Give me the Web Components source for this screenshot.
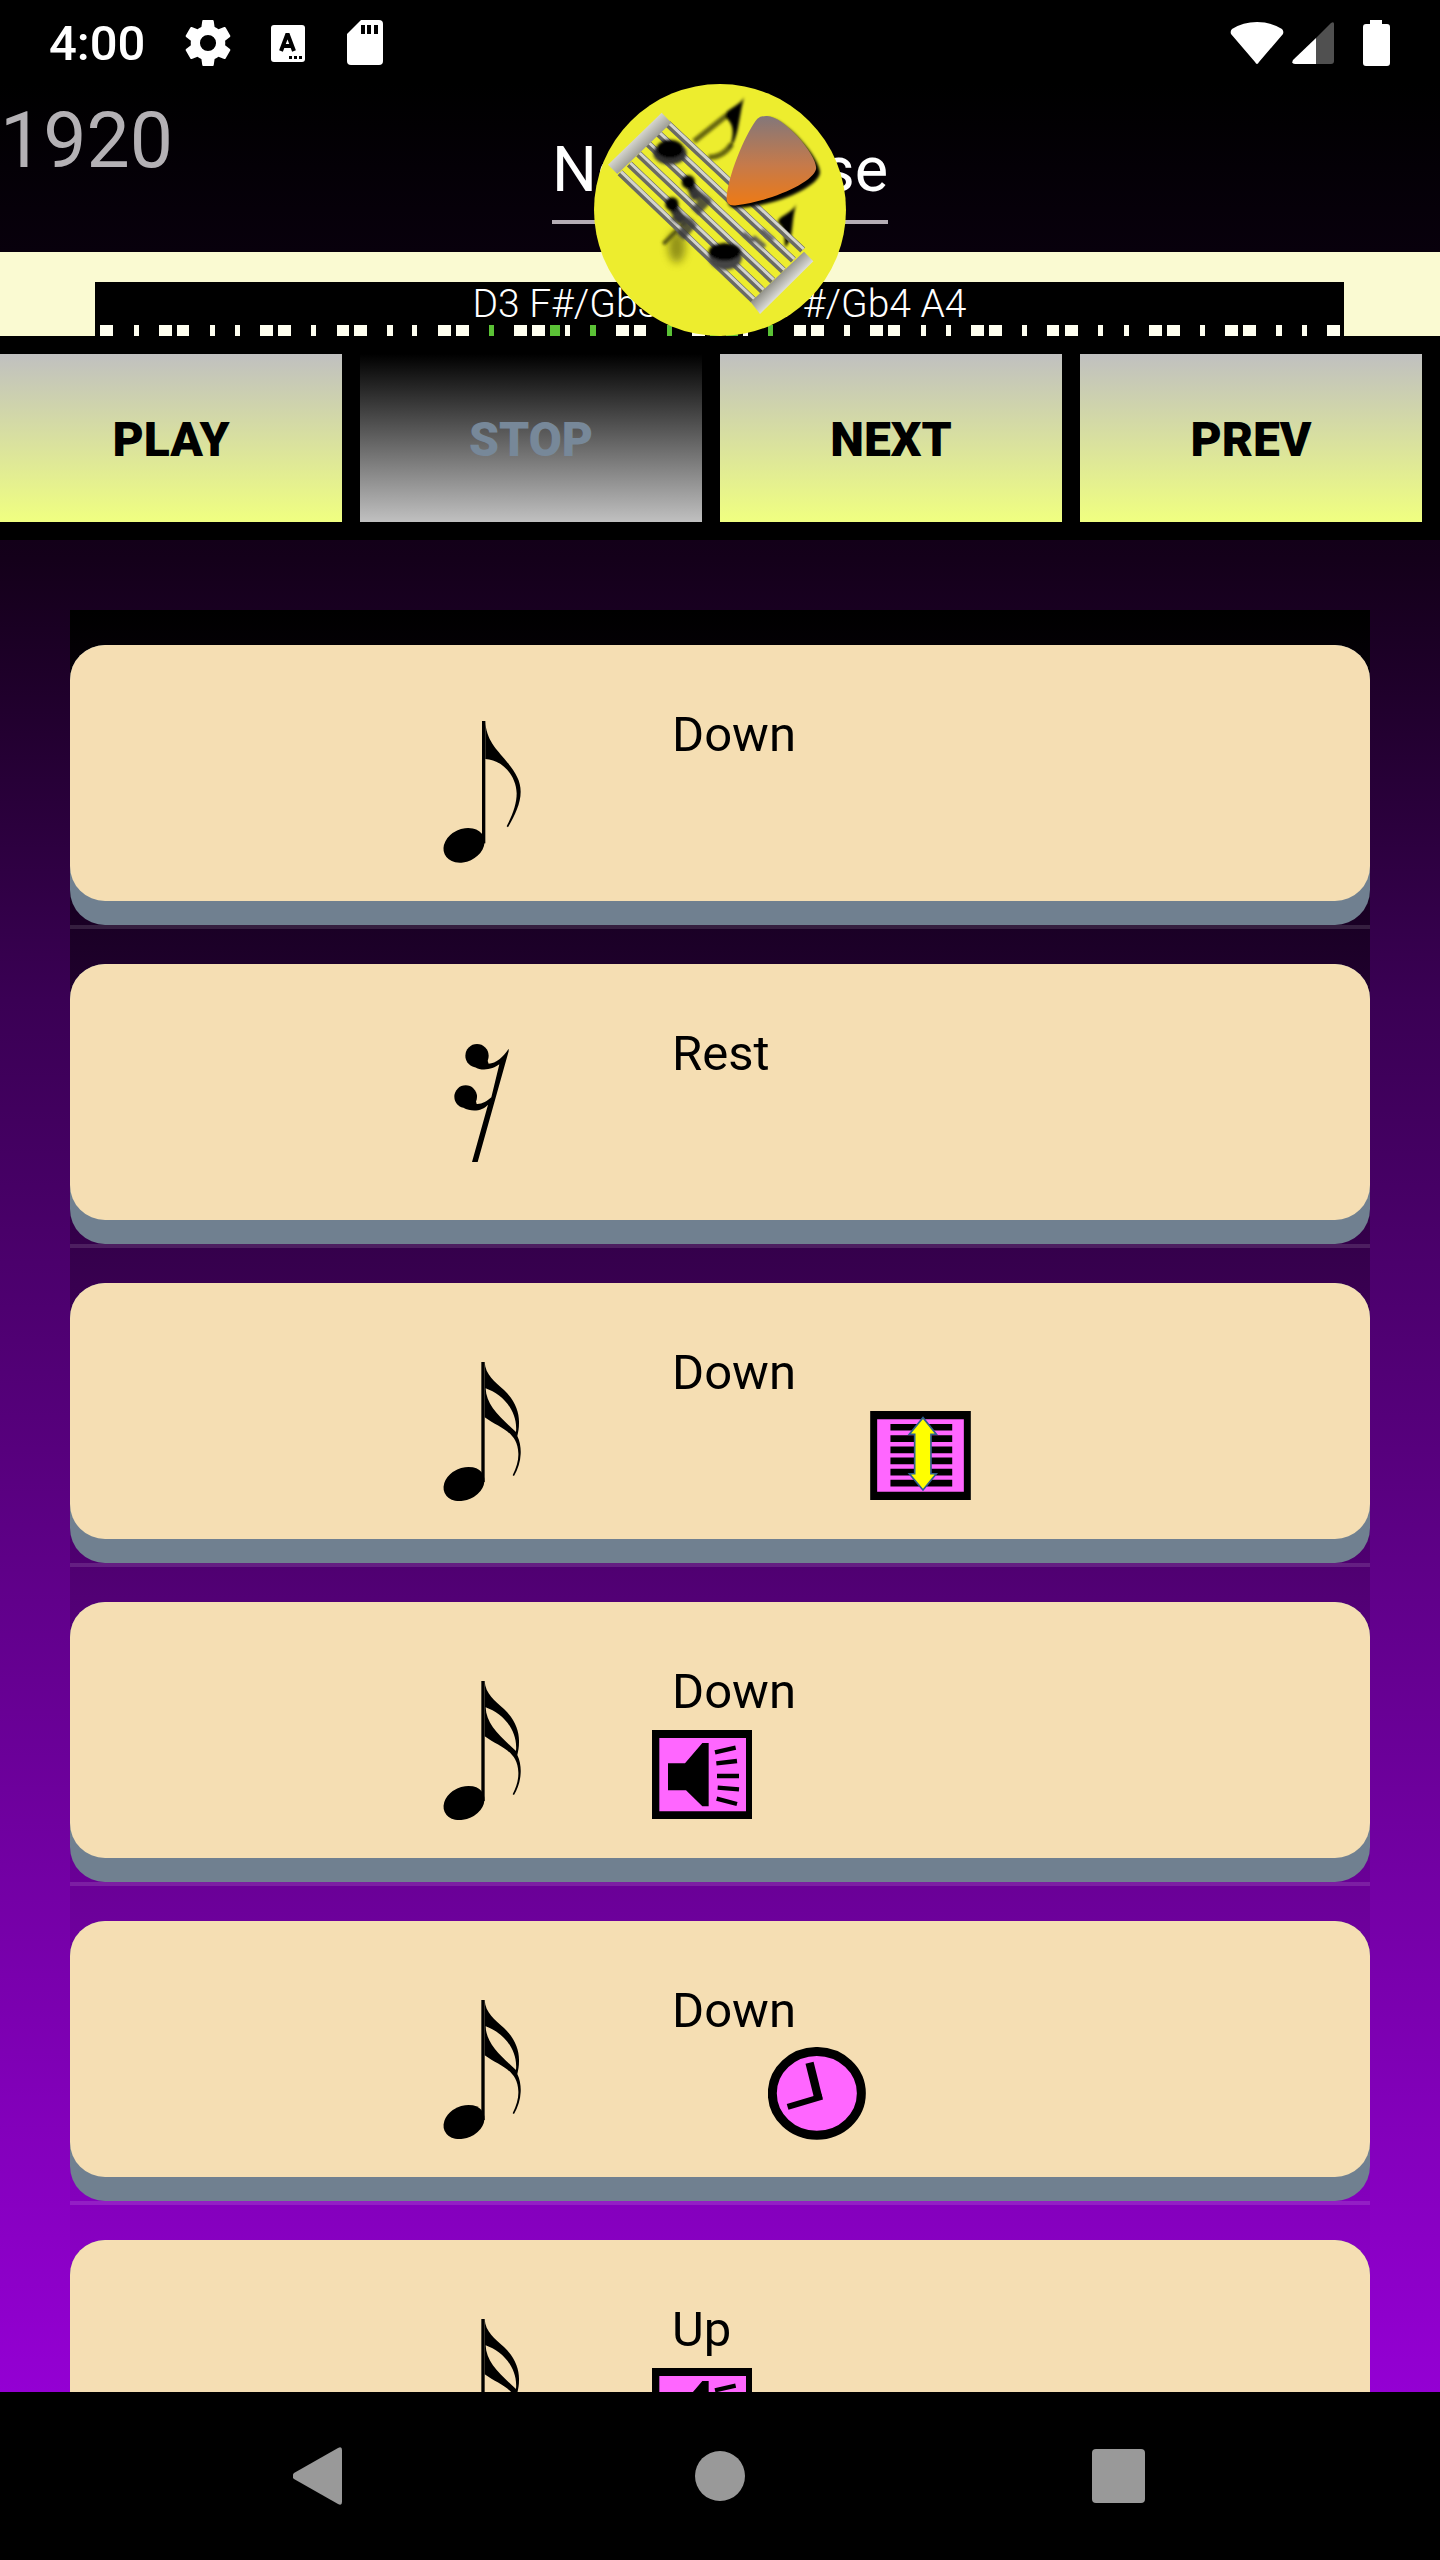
<!DOCTYPE html>
<html lang="en">
<head>
<meta charset="utf-8">
<meta name="viewport" content="width=device-width, initial-scale=1">
<title>New Phrase</title>
<style>
  body {
    margin: 0;
    background: #000;
    font-family: Roboto, "Liberation Sans", sans-serif;
  }
</style>
</head>
<body>
<phrase-app></phrase-app>

<script>
const makeTemplate = (html) => {
  const template = document.createElement('template');
  template.innerHTML = html;
  return template;
};

class BaseElement extends HTMLElement {
  constructor() {
    super();
    this.attachShadow({ mode: 'open' });
    this.shadowRoot.appendChild(this.constructor.template.content.cloneNode(true));
  }
}

class StatusBar extends BaseElement {}
StatusBar.template = makeTemplate(`
  <style>
    :host {
      display: flex;
      align-items: center;
      justify-content: space-between;
      box-sizing: border-box;
      height: 84px;
      padding: 2px 50px 0 49px;
      color: #fff;
      font-size: 49px;
      font-weight: 500;
    }
    .group { display: flex; align-items: center; }
    .left { gap: 40px; }
    .right { gap: 8px; }
    .battery { margin-left: 20px; }
    svg { display: block; }
  </style>
  <div class="group left">
    <span>4:00</span>
    <svg width="46" height="46" viewBox="2 2 20 20" fill="#fff"><path d="M19.43 12.98c.04-.32.07-.64.07-.98s-.03-.66-.07-.98l2.11-1.65c.19-.15.24-.42.12-.64l-2-3.46c-.12-.22-.39-.3-.61-.22l-2.49 1c-.52-.4-1.08-.73-1.69-.98l-.38-2.65A.49.49 0 0 0 14 2h-4c-.25 0-.46.18-.49.42l-.38 2.65c-.61.25-1.17.59-1.69.98l-2.49-1c-.23-.09-.49 0-.61.22l-2 3.46c-.13.22-.07.49.12.64l2.11 1.65c-.04.32-.07.65-.07.98s.03.66.07.98l-2.11 1.65c-.19.15-.24.42-.12.64l2 3.46c.12.22.39.3.61.22l2.49-1c.52.4 1.08.73 1.69.98l.38 2.65c.03.24.24.42.49.42h4c.25 0 .46-.18.49-.42l.38-2.65c.61-.25 1.17-.59 1.69-.98l2.49 1c.23.09.49 0 .61-.22l2-3.46c.12-.22.07-.49-.12-.64zM12 15.500a3.500 3.500 0 1 1 0-7 3.500 3.500 0 0 1 0 7z"/></svg>
    <svg width="34" height="37" viewBox="0 0 34 37"><rect width="34" height="37" rx="3" fill="#fff"/><path d="M10 26 16 10h1l6 16M12 21h9" fill="none" stroke="#000" stroke-width="4"/><path d="M18 31h3v3h-3zM23 31h3v3h-3zM28 31h3v3h-3z"/></svg>
    <svg width="40" height="46" viewBox="-2 0 40 46"><path d="M14 0h18q4 0 4 4v37q0 4-4 4H4q-4 0-4-4V14z" fill="#fff"/><path d="M14 5h4v9h-4zM20 5h4v9h-4zM27 5h4v9h-4z"/></svg>
  </div>
  <div class="group right">
    <svg width="54" height="44" viewBox="0 0 54 44"><path d="M27 43Q26 43 25 41L1 13Q0 10 2 8Q13 1 27 1T52 8Q54 10 53 13L29 41Q28 43 27 43z" fill="#fff"/></svg>
    <svg width="43" height="44" viewBox="0 0 43 44"><path d="M24 17 39 2q3-2 3 1v37q0 3-3 3H24z" fill="#505050"/><path d="M24 17V43H3q-4 0-2-4z" fill="#fff"/></svg>
    <svg class="battery" width="27" height="46" viewBox="0 0 27 46"><path d="M7 0h12v4h5q3 0 3 3v36q0 3-3 3H3q-3 0-3-3V7q0-3 3-3h4z" fill="#fff"/></svg>
  </div>
`);
customElements.define('status-bar', StatusBar);

class AppLogo extends BaseElement {}
AppLogo.template = makeTemplate(`
  <style>
    :host { display: block; width: 252px; height: 252px; }
    svg { display: block; width: 100%; height: 100%; }
  </style>
  <svg viewBox="42 42 756 756">
    <defs>
      <linearGradient id="pick" x1="0" y1="0" x2="0" y2="1">
        <stop offset="0" stop-color="#83777a"/>
        <stop offset=".55" stop-color="#c67a4a"/>
        <stop offset="1" stop-color="#ee7a14"/>
      </linearGradient>
      <linearGradient id="bar" x1="0" y1="0" x2="1" y2="1">
        <stop offset=".35" stop-color="#f0f0ea"/>
        <stop offset=".65" stop-color="#85857c"/>
      </linearGradient>
      <linearGradient id="bar2" x1="0" y1="0" x2="1" y2="1">
        <stop offset=".35" stop-color="#77776f"/>
        <stop offset=".6" stop-color="#e8e8e4"/>
      </linearGradient>
      <filter id="soft" x="-40%" y="-40%" width="180%" height="180%"><feGaussianBlur stdDeviation="4"/></filter>
      <filter id="haze" x="-60%" y="-60%" width="220%" height="220%"><feGaussianBlur stdDeviation="12"/></filter>
      <path id="lines" d="M262 160 668 540M235 190 640 570M205 222 610 602M176 252 578 632M148 282 548 662M120 308 520 690"/>
    </defs>
    <circle cx="420" cy="420" r="378" fill="#eded2e"/>
    <ellipse cx="290" cy="530" rx="26" ry="48" fill="#6c6c10" opacity=".7" filter="url(#haze)"/>
    <g filter="url(#soft)">
      <path d="M342 214 440 136M385 262Q430 262 455 222" fill="none" stroke="#66660c" stroke-width="16"/>
      <path d="M492 82C478 112 425 120 437 144C466 162 462 205 445 240C478 205 474 150 492 82z"/>
      <path d="M650 398C642 432 580 440 598 462C618 480 612 510 616 532C645 500 630 460 650 398z"/>
      <path d="M250 522 320 452" stroke="#55550c" stroke-width="12"/>
    </g>
    <use href="#lines" fill="none" stroke="#6a6a64" stroke-width="21"/>
    <use href="#lines" fill="none" stroke="#d4d4cc" stroke-width="9" transform="translate(3 -3)"/>
    <path d="M245 128 274 158 112 312 84 284z" fill="url(#bar)"/>
    <path d="M672 545 700 574 540 732 512 696z" fill="url(#bar2)"/>
    <g filter="url(#soft)">
      <path d="M325 335 350 385M275 405 305 455" stroke="#222" stroke-width="26"/>
      <path d="M335 365 385 400M345 425 385 385M280 435 335 465M300 500 340 455" stroke="#3a3a3a" stroke-width="30" opacity=".85"/>
      <ellipse cx="270" cy="250" rx="50" ry="34" fill="#333"/>
      <ellipse cx="436" cy="560" rx="50" ry="40" fill="#444"/>
      <ellipse cx="270" cy="237" rx="40" ry="28"/>
      <ellipse cx="434" cy="546" rx="48" ry="26"/>
      <circle cx="325" cy="336" r="20"/>
      <circle cx="276" cy="402" r="20"/>
      <path d="M520 500 555 530M545 480 580 510M490 490 520 515" stroke="#555" stroke-width="12"/>
      <path d="M562 144C610 138 722 264 720 308C718 348 590 408 474 414C450 416 442 404 444 388z"/>
    </g>
    <path d="M558 138C606 132 716 258 708 298C700 336 580 392 470 406C446 410 438 398 440 380C448 300 505 176 532 146Q542 138 558 138z" fill="url(#pick)"/>
  </svg>
`);
customElements.define('app-logo', AppLogo);

class PhraseHeader extends BaseElement {}
PhraseHeader.template = makeTemplate(`
  <style>
    :host {
      display: grid;
      grid-template-columns: 1fr 336px 1fr;
      align-items: start;
      height: 168px;
      position: relative;
    }
    .ticks {
      padding-top: 12px;
      font-size: 77px;
      line-height: 90px;
      color: #b4b1b5;
    }
    input {
      box-sizing: border-box;
      width: 100%;
      height: 92px;
      margin: 48px 0 0;
      padding: 0 0 14px;
      border: 0;
      border-bottom: 4px solid #b5adb5;
      border-radius: 0;
      background: none;
      outline: none;
      color: #fff;
      font: 63px/74px Roboto, "Liberation Sans", sans-serif;
    }
    /* the logo hangs over the title and the chord strip */
    app-logo {
      position: absolute;
      top: 0;
      left: calc(50% - 126px);
      z-index: 1;
    }
  </style>
  <div class="ticks">1920</div>
  <input type="text" value="New Phrase" aria-label="Phrase name">
  <app-logo></app-logo>
`);
customElements.define('phrase-header', PhraseHeader);

class ChordStrip extends BaseElement {
  connectedCallback() {
    // [x, width] of each key slot, with the sounding ones in green
    const keys = [
      [5, 13], [39, 5], [64, 13], [82, 12], [115, 5], [140, 5], [165, 13], [183, 13], [216, 5],
      [242, 12], [259, 13], [292, 6], [317, 5], [343, 13], [361, 13], [394, 5, 1], [419, 13],
      [437, 13], [455, 10, 1], [470, 5], [495, 6, 1], [521, 13], [539, 12], [572, 5, 1],
      [597, 13], [615, 12, 1], [631, 12, 1], [648, 5], [673, 5, 1], [699, 12], [716, 13],
      [749, 6], [775, 13], [793, 12], [826, 5], [851, 5], [876, 13], [894, 13], [927, 5],
      [952, 12], [970, 13], [1003, 5], [1029, 5], [1054, 13], [1072, 13], [1105, 5],
      [1130, 13], [1148, 13], [1181, 6], [1207, 5], [1232, 13],
    ];
    this.shadowRoot.querySelector('svg').innerHTML = keys
      .map(([x, w, on]) => `<rect x="${x}" width="${w}" height="11" fill="${on ? '#5bc236' : '#fffff0'}"/>`)
      .join('');
  }
}
ChordStrip.template = makeTemplate(`
  <style>
    :host {
      display: block;
      padding: 30px 96px 0 95px;
      background: #fafad2;
    }
    .keys { background: #000; }
    .notes {
      box-sizing: border-box;
      height: 43px;
      padding-top: 1px;
      color: #fff;
      font-size: 39px;
      font-weight: 300;
      line-height: 43px;
      text-align: center;
    }
    svg { display: block; width: 100%; height: 11px; }
  </style>
  <div class="keys">
    <div class="notes"><slot></slot></div>
    <svg viewBox="0 0 1249 11" preserveAspectRatio="none" shape-rendering="crispEdges"></svg>
  </div>
`);
customElements.define('chord-strip', ChordStrip);

class TransportButton extends BaseElement {
  connectedCallback() {
    this.shadowRoot.querySelector('button').disabled = this.hasAttribute('disabled');
  }
}
TransportButton.template = makeTemplate(`
  <style>
    :host { display: block; flex: 1; }
    button {
      display: block;
      width: 100%;
      height: 168px;
      padding: 4px 0 0;
      border: 0;
      background: linear-gradient(#c0c0c0, #f0ff80);
      color: #000;
      font: 900 48px/58px Roboto, "Liberation Sans", sans-serif;
      text-transform: uppercase;
    }
    button:disabled {
      background: linear-gradient(#000, #c0c0c0);
      color: #778899;
    }
  </style>
  <button type="button"><slot></slot></button>
`);
customElements.define('transport-button', TransportButton);

const NOTES = {
  eighth: `
    <path d="M246 93H256V460H246z"/>
    <ellipse cx="192" cy="466" rx="64" ry="49" transform="rotate(-25 192 466)"/>
    <path d="M256 93C258 150 290 178 318 212C345 245 362 270 362 305C362 340 345 375 324 412L320 409C340 370 350 340 350 310C348 250 300 208 256 207z"/>`,
  sixteenth: `
    <g transform="translate(0 6)">
      <path d="M244 96H254V456H244z"/>
      <ellipse cx="192" cy="462" rx="64" ry="48" transform="rotate(-25 192 462)"/>
      <path fill-rule="evenodd" d="M254 96C256 135 285 155 312 180C345 212 358 245 357 280C357 295 355 305 352 318C360 335 363 355 362 372C361 395 354 418 342 438L338 436C350 412 356 390 355 370C353 305 300 295 254 262zM257 175C258 225 300 262 348 306C354 240 305 192 257 175z"/>
    </g>`,
  rest: `
    <g transform="translate(0 33)">
      <circle cx="231" cy="107" r="35"/>
      <circle cx="197" cy="230" r="34"/>
      <path d="M326 86C310 110 288 130 266 131L260 115L225 141C245 155 280 148 298 133L274 232C262 243 245 253 230 252L227 240L190 263C215 277 248 273 264 254L216 426H233L326 94z"/>
    </g>`,
};

const EFFECTS = {
  volume: `
    <svg width="100" height="89" viewBox="36 1017 300 267">
      <path d="M36 1017H336V1284H36z"/>
      <path d="M58 1041H318V1261H58z" fill="#ff66ff"/>
      <path d="M84 1117H135L187 1056H206V1246H187L138 1198H84z"/>
      <path d="M225 1084 287 1070M229 1117 291 1110M231 1155H297M233 1190 297 1195M230 1223 291 1239" stroke="#000" stroke-width="13"/>
    </svg>`,
  clock: `
    <svg width="98" height="93" viewBox="385 77 295 279">
      <ellipse cx="532" cy="216" rx="134" ry="126" fill="#ff66ff" stroke="#000" stroke-width="27"/>
      <path d="M510 124 537 232" stroke="#000" stroke-width="25"/>
      <path d="M444 257 548 226" stroke="#000" stroke-width="18"/>
    </svg>`,
  bend: `
    <svg width="101" height="89" viewBox="690 60 303 268">
      <path d="M690 60H993V328H690z"/>
      <path d="M711 85H972V303H711z" fill="#ff66ff"/>
      <path d="M751 109H937M751 143H937M751 177H937M751 210H937M751 244H937M751 277H937" stroke="#000" stroke-width="20"/>
      <path d="M849 80 889 130H873V249H889L849 298 808 249H824V130H808z" fill="#ff0" stroke="#2f5f8f" stroke-width="5"/>
    </svg>`,
};

class StrumCard extends BaseElement {
  connectedCallback() {
    this.shadowRoot.querySelector('.note').innerHTML = NOTES[this.getAttribute('note')];
    const effect = this.getAttribute('effect');
    if (effect) {
      this.shadowRoot.querySelector(`.${effect}`).innerHTML = EFFECTS[effect];
    }
  }
}
StrumCard.template = makeTemplate(`
  <style>
    :host {
      display: block;
      padding-top: 35px;
      border-bottom: 4px solid rgba(255, 255, 255, .12);
    }
    .shadow {
      padding-bottom: 24px;
      border-radius: 35px;
      background: #708090;
    }
    .card {
      display: grid;
      grid-template-columns: 38% 1fr;
      align-items: start;
      border-radius: 35px;
      background: #f5deb3;
    }
    .note {
      width: 160px;
      height: 190px;
      margin-top: 45px;
      justify-self: end;
    }
    .info { padding: 61px 0 31px 88px; }
    .name {
      padding-left: 20px;
      font-size: 49px;
      line-height: 58px;
      color: #000;
    }
    .effects {
      display: grid;
      grid-template-columns: 116px 102px 102px;
      align-items: center;
      height: 106px;
    }
    svg { display: block; }
  </style>
  <div class="shadow">
    <div class="card">
      <svg class="note" viewBox="12 0 480 570"></svg>
      <div class="info">
        <div class="name"><slot></slot></div>
        <div class="effects">
          <div class="volume"></div>
          <div class="clock"></div>
          <div class="bend"></div>
        </div>
      </div>
    </div>
  </div>
`);
customElements.define('strum-card', StrumCard);

class NavBar extends BaseElement {}
NavBar.template = makeTemplate(`
  <style>
    :host {
      display: flex;
      height: 168px;
      padding: 0 120px;
      background: #000;
    }
    button {
      display: flex;
      flex: 1;
      align-items: center;
      justify-content: center;
      padding: 0;
      border: 0;
      background: none;
    }
    svg { fill: #999; }
  </style>
  <button type="button" aria-label="Back"><svg width="54" height="58" viewBox="1 0 54 58"><path d="M2 26 46 1q4-2 4 2v52q0 4-4 2L2 32q-3-3 0-6z"/></svg></button>
  <button type="button" aria-label="Home"><svg width="50" height="50" viewBox="0 0 50 50"><circle cx="25" cy="25" r="25"/></svg></button>
  <button type="button" aria-label="Recent apps"><svg width="56" height="54" viewBox="0 0 56 54"><rect width="53" height="54" rx="4"/></svg></button>
`);
customElements.define('nav-bar', NavBar);

class PhraseApp extends BaseElement {}
PhraseApp.template = makeTemplate(`
  <style>
    :host {
      display: flex;
      flex-direction: column;
      height: 100vh;
    }
    main {
      display: flex;
      flex: 1;
      flex-direction: column;
      min-height: 0;
      background: linear-gradient(#000 84px, #08000c 250px, #14001a 560px, #3a0054 1000px, #9400d3);
    }
    .transport {
      display: flex;
      gap: 18px;
      padding: 18px 18px 18px 0;
      background: #000;
    }
    .list {
      flex: 1;
      min-height: 0;
      margin: 70px 70px 0;
      overflow-y: auto;
      scrollbar-width: none;
      background: linear-gradient(#000, #9400d3);
    }
  </style>
  <main>
    <status-bar></status-bar>
    <phrase-header></phrase-header>
    <chord-strip>D3 F#/Gb3 A3 D4 F#/Gb4 A4</chord-strip>
    <div class="transport">
      <transport-button>Play</transport-button>
      <transport-button disabled>Stop</transport-button>
      <transport-button>Next</transport-button>
      <transport-button>Prev</transport-button>
    </div>
    <div class="list">
      <strum-card note="eighth">Down</strum-card>
      <strum-card note="rest">Rest</strum-card>
      <strum-card note="sixteenth" effect="bend">Down</strum-card>
      <strum-card note="sixteenth" effect="volume">Down</strum-card>
      <strum-card note="sixteenth" effect="clock">Down</strum-card>
      <strum-card note="sixteenth" effect="volume">Up</strum-card>
    </div>
  </main>
  <nav-bar></nav-bar>
`);
customElements.define('phrase-app', PhraseApp);
</script>
</body>
</html>
